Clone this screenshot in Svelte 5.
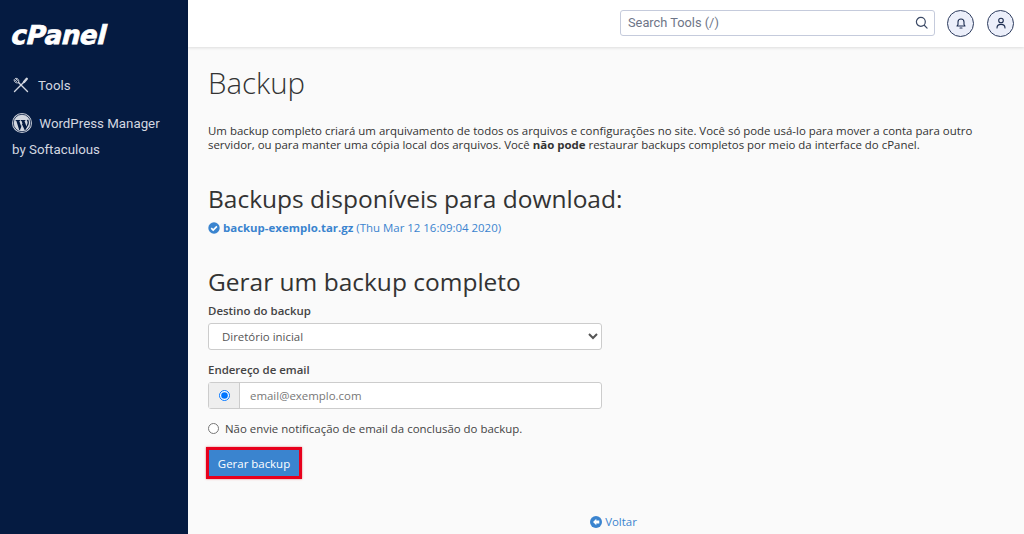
<script>
  let destination = $state('home');
  let notify = $state('email');
  let email = $state('');
</script>

<div class="shell">
  <aside class="sidebar">
    <div class="logo">cPanel</div>
    <nav>
      <a class="nav-item" href="#tools">
        <svg class="tools-icon" viewBox="0 0 16 16" width="16" height="16" fill="none" stroke="currentColor" stroke-linecap="round" stroke-linejoin="round">
          <path d="M14.500 14.500 5.500 5.500" stroke-width="1.400" />
          <path d="M5.800 5.200C6.500 3 4.500.8 2.300 1.400L4.400 3.500 3.400 4.600 1.300 2.500C.7 4.800 3 6.500 5.200 5.800" stroke-width="1" />
          <path d="M1.500 14.500 11 5" stroke-width="1.400" />
          <path d="M11 5 13.800 1.800" stroke-width="2.400" />
        </svg>
        <span>Tools</span>
      </a>
      <a class="nav-item wp" href="#wp">
        <svg viewBox="0 0 20 20" width="20" height="20">
          <circle cx="10" cy="10" r="10" fill="#d3d7e0" />
          <circle cx="10" cy="10" r="8.700" fill="none" stroke="#051b41" stroke-width="0.8" />
          <path d="M3.600 7h4.600v.8l-.9.2 2 5.800 1.100-3.300-.8-2.500-.7-.2V7h4.500v.8l-.9.2 2 5.600 1-3.400c.4-1.500-.4-2.200-.8-3l1.400-.8c1 1.800 1.100 3.500.4 5.300L13.400 17h-.8L10.200 11.800 8 17h-.8L4.400 8l-.8-.2Z" fill="#051b41" />
        </svg>
        <span>WordPress Manager</span>
        <span class="by">by Softaculous</span>
      </a>
    </nav>
  </aside>

  <div class="page">
    <header class="topbar">
      <div class="search">
        <input type="text" placeholder="Search Tools (/)" aria-label="Search Tools" />
        <svg viewBox="0 0 14 14" width="13" height="13" fill="none" stroke="#3c4a66" stroke-width="1.300" stroke-linecap="round">
          <circle cx="6.300" cy="6.300" r="4.800" />
          <path d="M10 10l3 3" />
        </svg>
      </div>
      <button class="round" aria-label="Notifications">
        <svg viewBox="0 0 12 12" width="12" height="12" fill="none" stroke="#1d2d50" stroke-width="1.100" stroke-linecap="round" stroke-linejoin="round">
          <path d="M2 9h8L9 7.500V5a3 3 0 0 0-6 0v2.500Z" />
          <path d="M5 11h2" />
        </svg>
      </button>
      <button class="round" aria-label="Account">
        <svg viewBox="0 0 12 12" width="12" height="12" fill="none" stroke="#1d2d50" stroke-width="1.100" stroke-linecap="round">
          <circle cx="6" cy="3.500" r="2.300" />
          <path d="M2 11c0-2.300 1.500-3.600 4-3.600s4 1.300 4 3.600" />
        </svg>
      </button>
    </header>

    <main class="content">
      <h1>Backup</h1>
      <p class="intro">
        Um backup completo criará um arquivamento de todos os arquivos e configurações no site. Você só pode usá-lo para mover a conta para outro servidor, ou para manter uma cópia local dos arquivos. Você <strong>não pode</strong> restaurar backups completos por meio da interface do cPanel.
      </p>

      <h2 class="available">Backups disponíveis para download:</h2>
      <p class="download">
        <svg viewBox="0 0 12 12" width="12" height="12">
          <circle cx="6" cy="6" r="5.700" fill="#3a84cf" />
          <path d="M3.200 6.100 5.200 8 8.900 4.400" fill="none" stroke="#fff" stroke-width="1.700" />
        </svg>
        <a href="#file"><strong>backup-exemplo.tar.gz</strong> (Thu Mar 12 16:09:04 2020)</a>
      </p>

      <h2 class="generate">Gerar um backup completo</h2>
      <form class="form" onsubmit={(e) => e.preventDefault()}>
        <label class="field-label" for="dest">Destino do backup</label>
        <select id="dest" bind:value={destination}>
          <option value="home">Diretório inicial</option>
        </select>

        <label class="field-label email-label" for="email">Endereço de email</label>
        <div class="input-group">
          <span class="addon">
            <input type="radio" name="notify" value="email" bind:group={notify} aria-label="Enviar email" />
          </span>
          <input id="email" type="text" placeholder="email@exemplo.com" bind:value={email} />
        </div>

        <label class="radio-line">
          <input type="radio" name="notify" value="none" bind:group={notify} />
          Não envie notificação de email da conclusão do backup.
        </label>

        <button class="submit" type="submit">Gerar backup</button>
      </form>

      <div class="back">
        <svg viewBox="0 0 12 12" width="12" height="12">
          <circle cx="6" cy="6" r="6" fill="#3a84cf" />
          <path d="M6.300 2.800 3 6l3.300 3.200V7.400H9.300V4.600H6.300Z" fill="#fff" />
        </svg>
        <a href="#back">Voltar</a>
      </div>
    </main>
  </div>
</div>

<style>
  :global(body) {
    margin: 0;
    background: #fafafa;
    overflow: hidden;
  }
  .shell {
    display: flex;
    height: 534px;
    overflow: hidden;
    font-family: "Open Sans", sans-serif;
    color: #333;
  }
  .sidebar {
    width: 188px;
    flex: none;
    background: #051b41;
    color: #d3d7e0;
    font-family: Roboto, sans-serif;
    font-size: 13.300px;
  }
  .logo {
    margin: 19px 0 0 8px;
    font-family: "DejaVu Sans", sans-serif;
    font-size: 26px;
    line-height: 32px;
    font-weight: 700;
    letter-spacing: -0.3px;
    color: #fff;
    -webkit-text-stroke: 0.8px #fff;
    transform: skewX(-14deg);
    transform-origin: left bottom;
    width: max-content;
  }
  nav {
    margin-top: 22px;
  }
  .nav-item {
    display: block;
    color: inherit;
    text-decoration: none;
    padding-left: 12px;
    line-height: 26px;
  }
  .nav-item svg {
    vertical-align: middle;
  }
  .tools-icon {
    margin: -2px 6px 0 1px;
  }
  .wp {
    margin-top: 12px;
  }
  .wp svg {
    margin: -2px 4px 0 0;
  }
  .by {
    display: block;
  }
  .page {
    flex: 1;
    min-width: 0;
  }
  .topbar {
    height: 47px;
    background: #fff;
    box-shadow: 0 1px 3px rgba(0, 0, 0, 0.12);
    display: flex;
    align-items: center;
    justify-content: flex-end;
    padding-right: 10px;
    gap: 13px;
    position: relative;
  }
  .search {
    width: 315px;
    box-sizing: border-box;
    height: 26px;
    border: 1px solid #c5cbdc;
    border-radius: 3px;
    display: flex;
    align-items: center;
    padding: 0 6px 0 7px;
    margin: -2px -1px 0 0;
  }
  .search input {
    flex: 1;
    min-width: 0;
    border: 0;
    outline: 0;
    padding: 0;
    font-family: Roboto, sans-serif;
    font-size: 12.800px;
    background: transparent;
  }
  .search input::placeholder {
    color: #6e7587;
    opacity: 1;
  }
  .round {
    width: 27px;
    height: 27px;
    border-radius: 50%;
    border: 1px solid #2b3a5c;
    background: #eceffa;
    padding: 0;
    display: flex;
    align-items: center;
    justify-content: center;
    margin-top: -1px;
  }
  .content {
    padding: 0 20px;
  }
  h1 {
    margin: 0;
    padding-top: 16px;
    font-size: 29.400px;
    line-height: 41px;
    font-weight: 300;
    color: #333;
  }
  .intro {
    margin: 19.500px 0 0;
    font-size: 11.440px;
    line-height: 14.500px;
  }
  h2 {
    margin: 0;
    font-size: 24.500px;
    line-height: 33px;
    font-weight: 400;
    color: #333;
  }
  .available {
    margin-top: 29.500px;
  }
  .download {
    margin: 4px 0 0;
    font-size: 11.440px;
    line-height: 17px;
  }
  .download svg {
    vertical-align: -2px;
  }
  a {
    color: #3a84cf;
    text-decoration: none;
  }
  .generate {
    margin-top: 29px;
  }
  .form {
    width: 394px;
    display: flex;
    flex-direction: column;
    align-items: flex-start;
  }
  .field-label {
    font-size: 11.440px;
    line-height: 17px;
    font-weight: 600;
    margin-top: 4px;
    color: #444;
  }
  select {
    width: 100%;
    height: 27px;
    margin-top: 4px;
    padding: 0 9px;
    border: 1px solid #ccc;
    border-radius: 3px;
    background: #fff;
    color: #555;
    font-family: "Open Sans", sans-serif;
    font-size: 11.440px;
  }
  .email-label {
    margin-top: 11px;
  }
  .input-group {
    display: flex;
    width: 100%;
    height: 27px;
    margin-top: 4px;
    border: 1px solid #ccc;
    border-radius: 3px;
    box-sizing: border-box;
    background: #fff;
  }
  .addon {
    width: 30px;
    flex: none;
    background: #eee;
    border-right: 1px solid #ccc;
    display: flex;
    align-items: center;
    justify-content: center;
  }
  .addon input,
  .radio-line input {
    width: 11px;
    height: 11px;
    margin: 0;
  }
  .input-group input[type="text"] {
    flex: 1;
    min-width: 0;
    border: 0;
    outline: 0;
    padding: 0 10px;
    background: transparent;
    font-family: "Open Sans", sans-serif;
    font-size: 11.440px;
    color: #555;
  }
  .input-group input::placeholder {
    color: #777;
    opacity: 1;
  }
  .radio-line {
    display: flex;
    align-items: center;
    gap: 6px;
    margin-top: 11px;
    font-size: 11.440px;
    line-height: 17px;
    color: #444;
  }
  .submit {
    margin-top: 10px;
    margin-left: -2px;
    width: 96px;
    height: 32px;
    border: 3px solid #e8001c;
    background: #3a84cf;
    color: #fff;
    font-family: "Open Sans", sans-serif;
    font-size: 11.440px;
    padding: 0;
    box-sizing: border-box;
    box-shadow: 0 0 2px rgba(200, 0, 0, 0.5);
  }
  .back {
    margin-top: 34px;
    text-align: center;
    font-size: 11.440px;
    line-height: 17px;
    width: 811px;
  }
  .back svg {
    vertical-align: -2px;
  }
</style>
